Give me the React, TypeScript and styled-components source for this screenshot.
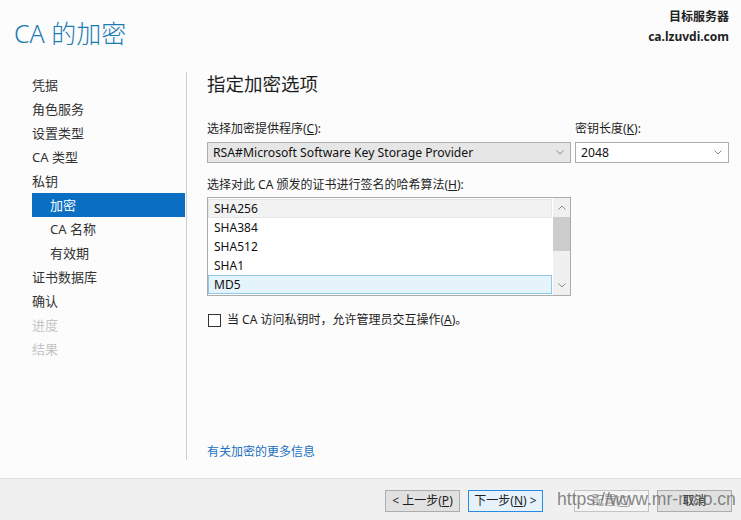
import React from 'react';
import styled, { createGlobalStyle } from 'styled-components';

const GlobalStyle = createGlobalStyle`
  html, body {
    margin: 0;
    padding: 0;
    background: #fcfcfc;
  }
  body {
    font-family: "Noto Sans", "Noto Sans CJK SC", sans-serif;
    color: #1e1e1e;
  }
`;

const Page = styled.div`
  position: relative;
  width: 741px;
  height: 520px;
  display: flex;
  flex-direction: column;
  background: #fcfcfc;
  overflow: hidden;
`;

const Header = styled.header`
  height: 72px;
  display: flex;
  justify-content: space-between;
  align-items: flex-start;
  padding: 0 12px 0 14px;
  box-sizing: border-box;
`;

const Title = styled.h1`
  margin: 17px 0 0;
  font-size: 25px;
  line-height: 32px;
  font-weight: 300;
  color: #1b7bb3;
`;

const Server = styled.div`
  margin-top: 7px;
  text-align: right;
  font-size: 12px;
  line-height: 20px;
  font-weight: 700;
  color: #222;
`;

const Body = styled.div`
  flex: 1;
  display: flex;
  min-height: 0;
`;

const Nav = styled.nav`
  width: 187px;
  box-sizing: border-box;
  padding: 1px 1px 0 32px;
  margin-bottom: 18px;
  border-right: 1px solid #cfcfcf;
`;

const NavItem = styled.div<{ $sub?: boolean; $active?: boolean; $disabled?: boolean }>`
  height: 24px;
  line-height: 24px;
  font-size: 13px;
  padding-left: ${(p) => (p.$sub ? '18px' : '0')};
  background: ${(p) => (p.$active ? '#0a6fc2' : 'transparent')};
  color: ${(p) => (p.$active ? '#fff' : p.$disabled ? '#c4c4c4' : '#333')};
  white-space: nowrap;
`;

const Content = styled.main`
  flex: 1;
  display: flex;
  flex-direction: column;
  padding: 0 12px 18px 20px;
  font-size: 12px;
`;

const Heading = styled.h2`
  margin: 0;
  font-size: 18.5px;
  line-height: 24px;
  font-weight: 400;
  color: #1e1e1e;
`;

const FieldGrid = styled.div`
  display: grid;
  grid-template-columns: 364px 154px;
  column-gap: 4px;
  margin-top: 25px;
`;

const Label = styled.div<{ $gap?: number }>`
  line-height: 16px;
  margin-top: ${(p) => p.$gap ?? 0}px;
  margin-bottom: 5px;
  color: #1e1e1e;
  white-space: nowrap;
`;

const Combo = styled.div<{ $white?: boolean }>`
  height: 21px;
  box-sizing: border-box;
  display: flex;
  align-items: center;
  justify-content: space-between;
  padding: 0 6px 0 5px;
  border: 1px solid #adadad;
  background: ${(p) => (p.$white ? '#fff' : '#e6e6e6')};
  font-size: 12.2px;
  color: #111;
`;

const ListBox = styled.div`
  width: 364px;
  height: 99px;
  box-sizing: border-box;
  margin-top: -1px;
  border: 1px solid #acacac;
  background: #fff;
  display: flex;
`;

const Rows = styled.div`
  flex: 1;
  padding: 1px 1px 1px 0;
`;

const Row = styled.div<{ $state?: 'hover' | 'selected' }>`
  height: 19px;
  line-height: 17px;
  box-sizing: border-box;
  padding-left: 5px;
  font-size: 12px;
  color: #111;
  border: 1px solid
    ${(p) => (p.$state === 'selected' ? '#8fc8ec' : p.$state === 'hover' ? '#e6e6e6' : 'transparent')};
  background: ${(p) => (p.$state === 'selected' ? '#e5f3fb' : p.$state === 'hover' ? '#f2f2f2' : 'transparent')};
`;

const ScrollBar = styled.div`
  width: 17px;
  background: #f0f0f0;
  display: flex;
  flex-direction: column;
  align-items: center;
`;

const ScrollArrow = styled.div`
  height: 19px;
  width: 17px;
  display: flex;
  align-items: center;
  justify-content: center;
`;

const ScrollThumb = styled.div`
  width: 17px;
  height: 34px;
  background: #cdcdcd;
`;

const ScrollTrack = styled.div`
  flex: 1;
`;

const CheckRow = styled.label`
  display: flex;
  align-items: center;
  gap: 6px;
  margin-top: 16px;
  padding-left: 1px;
  line-height: 16px;
  color: #1e1e1e;
`;

const CheckBox = styled.span`
  width: 13px;
  height: 13px;
  box-sizing: border-box;
  border: 1px solid #333;
  background: #fff;
`;

const MoreLink = styled.a`
  margin-top: auto;
  line-height: 16px;
  color: #1a6fc0;
  text-decoration: none;
`;

const Footer = styled.footer`
  height: 42px;
  box-sizing: border-box;
  border-top: 1px solid #dfdfdf;
  background: #f0f0f0;
  display: flex;
  justify-content: flex-end;
  align-items: flex-start;
  padding: 11px 9px 0 0;
`;

const Button = styled.button<{ $variant?: 'default' | 'primary' | 'disabled'; $gap?: number }>`
  width: 75px;
  height: 22px;
  margin-left: ${(p) => p.$gap ?? 8}px;
  padding: 0;
  box-sizing: border-box;
  font-family: inherit;
  font-size: 12px;
  line-height: 18px;
  border: 1px solid
    ${(p) => (p.$variant === 'primary' ? '#2a8ce0' : p.$variant === 'disabled' ? '#c4c4c4' : '#adadad')};
  background: ${(p) => (p.$variant === 'primary' ? '#e5f1fb' : p.$variant === 'disabled' ? '#f4f4f4' : '#e1e1e1')};
  color: ${(p) => (p.$variant === 'disabled' ? '#9a9a9a' : '#1e1e1e')};
`;

const Watermark = styled.div`
  position: absolute;
  left: 557px;
  top: 489px;
  font-family: "Liberation Sans", Arial, sans-serif;
  font-size: 17.6px;
  line-height: 20px;
  color: rgba(105, 105, 105, 0.8);
  pointer-events: none;
  white-space: nowrap;
`;

const Chevron = ({ up }: { up?: boolean }) => (
  <svg width="8" height="5" viewBox="0 0 8 5">
    <path
      d={up ? 'M0.5 4.5 L4 1 L7.5 4.5' : 'M0.5 0.5 L4 4 L7.5 0.5'}
      fill="none"
      stroke="#8a8a8a"
      strokeWidth="1"
    />
  </svg>
);

const navItems = [
  { text: '凭据' },
  { text: '角色服务' },
  { text: '设置类型' },
  { text: 'CA 类型' },
  { text: '私钥' },
  { text: '加密', sub: true, active: true },
  { text: 'CA 名称', sub: true },
  { text: '有效期', sub: true },
  { text: '证书数据库' },
  { text: '确认' },
  { text: '进度', disabled: true },
  { text: '结果', disabled: true },
];

const hashes = ['SHA256', 'SHA384', 'SHA512', 'SHA1', 'MD5'];

const App = () => {
  return (
    <>
      <GlobalStyle />
      <Page>
        <Header>
          <Title>CA 的加密</Title>
          <Server>
            <div>目标服务器</div>
            <div>ca.lzuvdi.com</div>
          </Server>
        </Header>

        <Body>
          <Nav>
            {navItems.map((item) => (
              <NavItem key={item.text} $sub={item.sub} $active={item.active} $disabled={item.disabled}>
                {item.text}
              </NavItem>
            ))}
          </Nav>

          <Content>
            <Heading>指定加密选项</Heading>

            <FieldGrid>
              <div>
                <Label>
                  选择加密提供程序(<u>C</u>):
                </Label>
                <Combo>
                  <span>RSA#Microsoft Software Key Storage Provider</span>
                  <Chevron />
                </Combo>
              </div>
              <div>
                <Label>
                  密钥长度(<u>K</u>):
                </Label>
                <Combo $white>
                  <span>2048</span>
                  <Chevron />
                </Combo>
              </div>
            </FieldGrid>

            <Label $gap={14}>
              选择对此 CA 颁发的证书进行签名的哈希算法(<u>H</u>):
            </Label>
            <ListBox>
              <Rows>
                {hashes.map((h, i) => (
                  <Row key={h} $state={i === 0 ? 'hover' : i === hashes.length - 1 ? 'selected' : undefined}>
                    {h}
                  </Row>
                ))}
              </Rows>
              <ScrollBar>
                <ScrollArrow>
                  <Chevron up />
                </ScrollArrow>
                <ScrollThumb />
                <ScrollTrack />
                <ScrollArrow>
                  <Chevron />
                </ScrollArrow>
              </ScrollBar>
            </ListBox>

            <CheckRow>
              <CheckBox />
              <span>
                当 CA 访问私钥时，允许管理员交互操作(<u>A</u>)。
              </span>
            </CheckRow>

            <MoreLink href="#">有关加密的更多信息</MoreLink>
          </Content>
        </Body>

        <Footer>
          <Button>
            &lt; 上一步(<u>P</u>)
          </Button>
          <Button $variant="primary">
            下一步(<u>N</u>) &gt;
          </Button>
          <Button $variant="disabled" $gap={31}>
            配置(<u>C</u>)
          </Button>
          <Button>取消</Button>
        </Footer>

        <Watermark>https://www.mr-mao.cn</Watermark>
      </Page>
    </>
  );
};

export default App;
